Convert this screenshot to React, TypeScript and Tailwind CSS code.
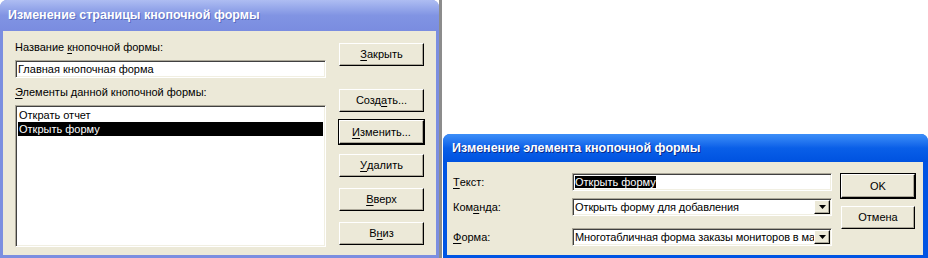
import React from 'react';

type BtnProps = {
    children: React.ReactNode;
    def?: boolean;
    className?: string;
};

// classic 3d push button, "def" adds the black frame of the default button
const Btn = ({ children, def, className }: BtnProps) => (
    <div className={(def ? "border border-black " : "p-px ") + (className ?? "")}>
        <div className="h-full flex items-center justify-center bg-[#ece9d8] border border-t-white border-l-white border-r-black border-b-black shadow-[inset_-1px_-1px_0_#aca899] text-[11px] text-black">
            {children}
        </div>
    </div>
);

const U = ({ children }: { children: React.ReactNode }) => (
    <span className="underline underline-offset-[2px] decoration-1">{children}</span>
);

const sunken = "bg-white border border-t-[#aca899] border-l-[#aca899] border-b-white border-r-white shadow-[inset_1px_1px_0_#404040,inset_-1px_-1px_0_#f1efe2]";

const Combo = ({ value }: { value: string }) => (
    <div className={"h-[18px] w-[260px] flex items-stretch " + sunken}>
        <div className="flex-1 min-w-0 overflow-hidden whitespace-nowrap pl-[2px] pt-[1px] text-[11px] leading-[14px] tracking-[-0.1px]">{value}</div>
        <div className="w-[16px] my-[1px] mr-[1px] flex items-center justify-center bg-[#ece9d8] border border-t-white border-l-white border-r-black border-b-black shadow-[inset_-1px_-1px_0_#aca899]">
            <svg width="7" height="4" viewBox="0 0 7 4"><path d="M0 0H7L3.5 4Z" fill="#000" /></svg>
        </div>
    </div>
);

export default function App() {
    return (
        <div className="w-[928px] h-[258px] bg-white flex font-['Liberation_Sans',sans-serif] text-black overflow-hidden">
            {/* switchboard page window (inactive) */}
            <div className="w-[439px] h-[258px] flex flex-col rounded-t-[7px] bg-[#7b8ee0] overflow-hidden">
                <div className="h-[31px] flex items-center pl-[8px] bg-gradient-to-b from-[#aebdf2] via-[#8194e3] to-[#7a8ce0]">
                    <span className="text-white font-bold text-[12.5px] [text-shadow:1px_1px_0_#5a6cc0]">Изменение страницы кнопочной формы</span>
                </div>
                <div className="flex-1 mx-[3px] mb-[3px] bg-[#ece9d8] flex pl-[12px] text-[11px]">
                    <div className="w-[311px] flex flex-col">
                        <div className="mt-[9px] leading-[14px]">Название <U>к</U>нопочной формы:</div>
                        <div className={"mt-[6px] h-[18px] pl-[2px] pt-[1px] leading-[14px] " + sunken}>Главная кнопочная форма</div>
                        <div className="mt-[7px] leading-[14px]"><U>Э</U>лементы данной кнопочной формы:</div>
                        <div className={"mt-[6px] h-[142px] p-[2px] leading-[14px] " + sunken}>
                            <div className="h-[14px] pl-[1px]">Открать отчет</div>
                            <div className="h-[14px] pl-[1px] bg-black text-white">Открыть форму</div>
                        </div>
                    </div>
                    <div className="ml-[12px] w-[87px] flex flex-col">
                        <Btn className="mt-[11px] h-[25px]"><U>З</U>акрыть</Btn>
                        <Btn className="mt-[21px] h-[25px]">Созд<U>а</U>ть...</Btn>
                        <Btn def className="mt-[6px] h-[26px]"><U>И</U>зменить...</Btn>
                        <Btn className="mt-[8px] h-[25px]"><U>У</U>далить</Btn>
                        <Btn className="mt-[9px] h-[25px]"><U>В</U>верх</Btn>
                        <Btn className="mt-[9px] h-[25px]">В<U>н</U>из</Btn>
                    </div>
                </div>
            </div>
            <div className="w-[3px] h-[258px] bg-[#8c8c8c]" />
            <div className="w-[1px]" />
            {/* switchboard item window (active) */}
            <div className="mt-[134px] w-[485px] h-[124px] flex flex-col rounded-t-[7px] bg-[#0054e3] overflow-hidden">
                <div className="h-[28px] flex items-center pl-[9px] bg-gradient-to-b from-[#3d8ff8] via-[#0a5fe8] to-[#0052e0]">
                    <span className="text-white font-bold text-[12.5px] [text-shadow:1px_1px_0_#0a2a8a]">Изменение элемента кнопочной формы</span>
                </div>
                <div className="flex-1 ml-[4px] mr-[5px] mb-[3px] bg-[#ece9d8] flex pl-[6px] text-[11px]">
                    <div className="w-[119px] flex flex-col">
                        <div className="mt-[11px] h-[18px] flex items-center"><U>Т</U>екст:</div>
                        <div className="mt-[7px] h-[18px] flex items-center">Ком<U>а</U>нда:</div>
                        <div className="mt-[12px] h-[18px] flex items-center"><U>Ф</U>орма:</div>
                    </div>
                    <div className="w-[260px] flex flex-col">
                        <div className={"mt-[11px] h-[18px] pl-[2px] pt-[1px] leading-[14px] " + sunken}>
                            <span className="bg-black text-white">Открыть форму</span>
                        </div>
                        <div className="mt-[7px]"><Combo value="Открыть форму для добавления" /></div>
                        <div className="mt-[12px]"><Combo value="Многотабличная форма заказы мониторов в ма" /></div>
                    </div>
                    <div className="ml-[8px] w-[76px] flex flex-col">
                        <Btn def className="mt-[11px] h-[26px]">OK</Btn>
                        <Btn className="mt-[6px] h-[25px]">Отмена</Btn>
                    </div>
                </div>
            </div>
        </div>
    );
}
